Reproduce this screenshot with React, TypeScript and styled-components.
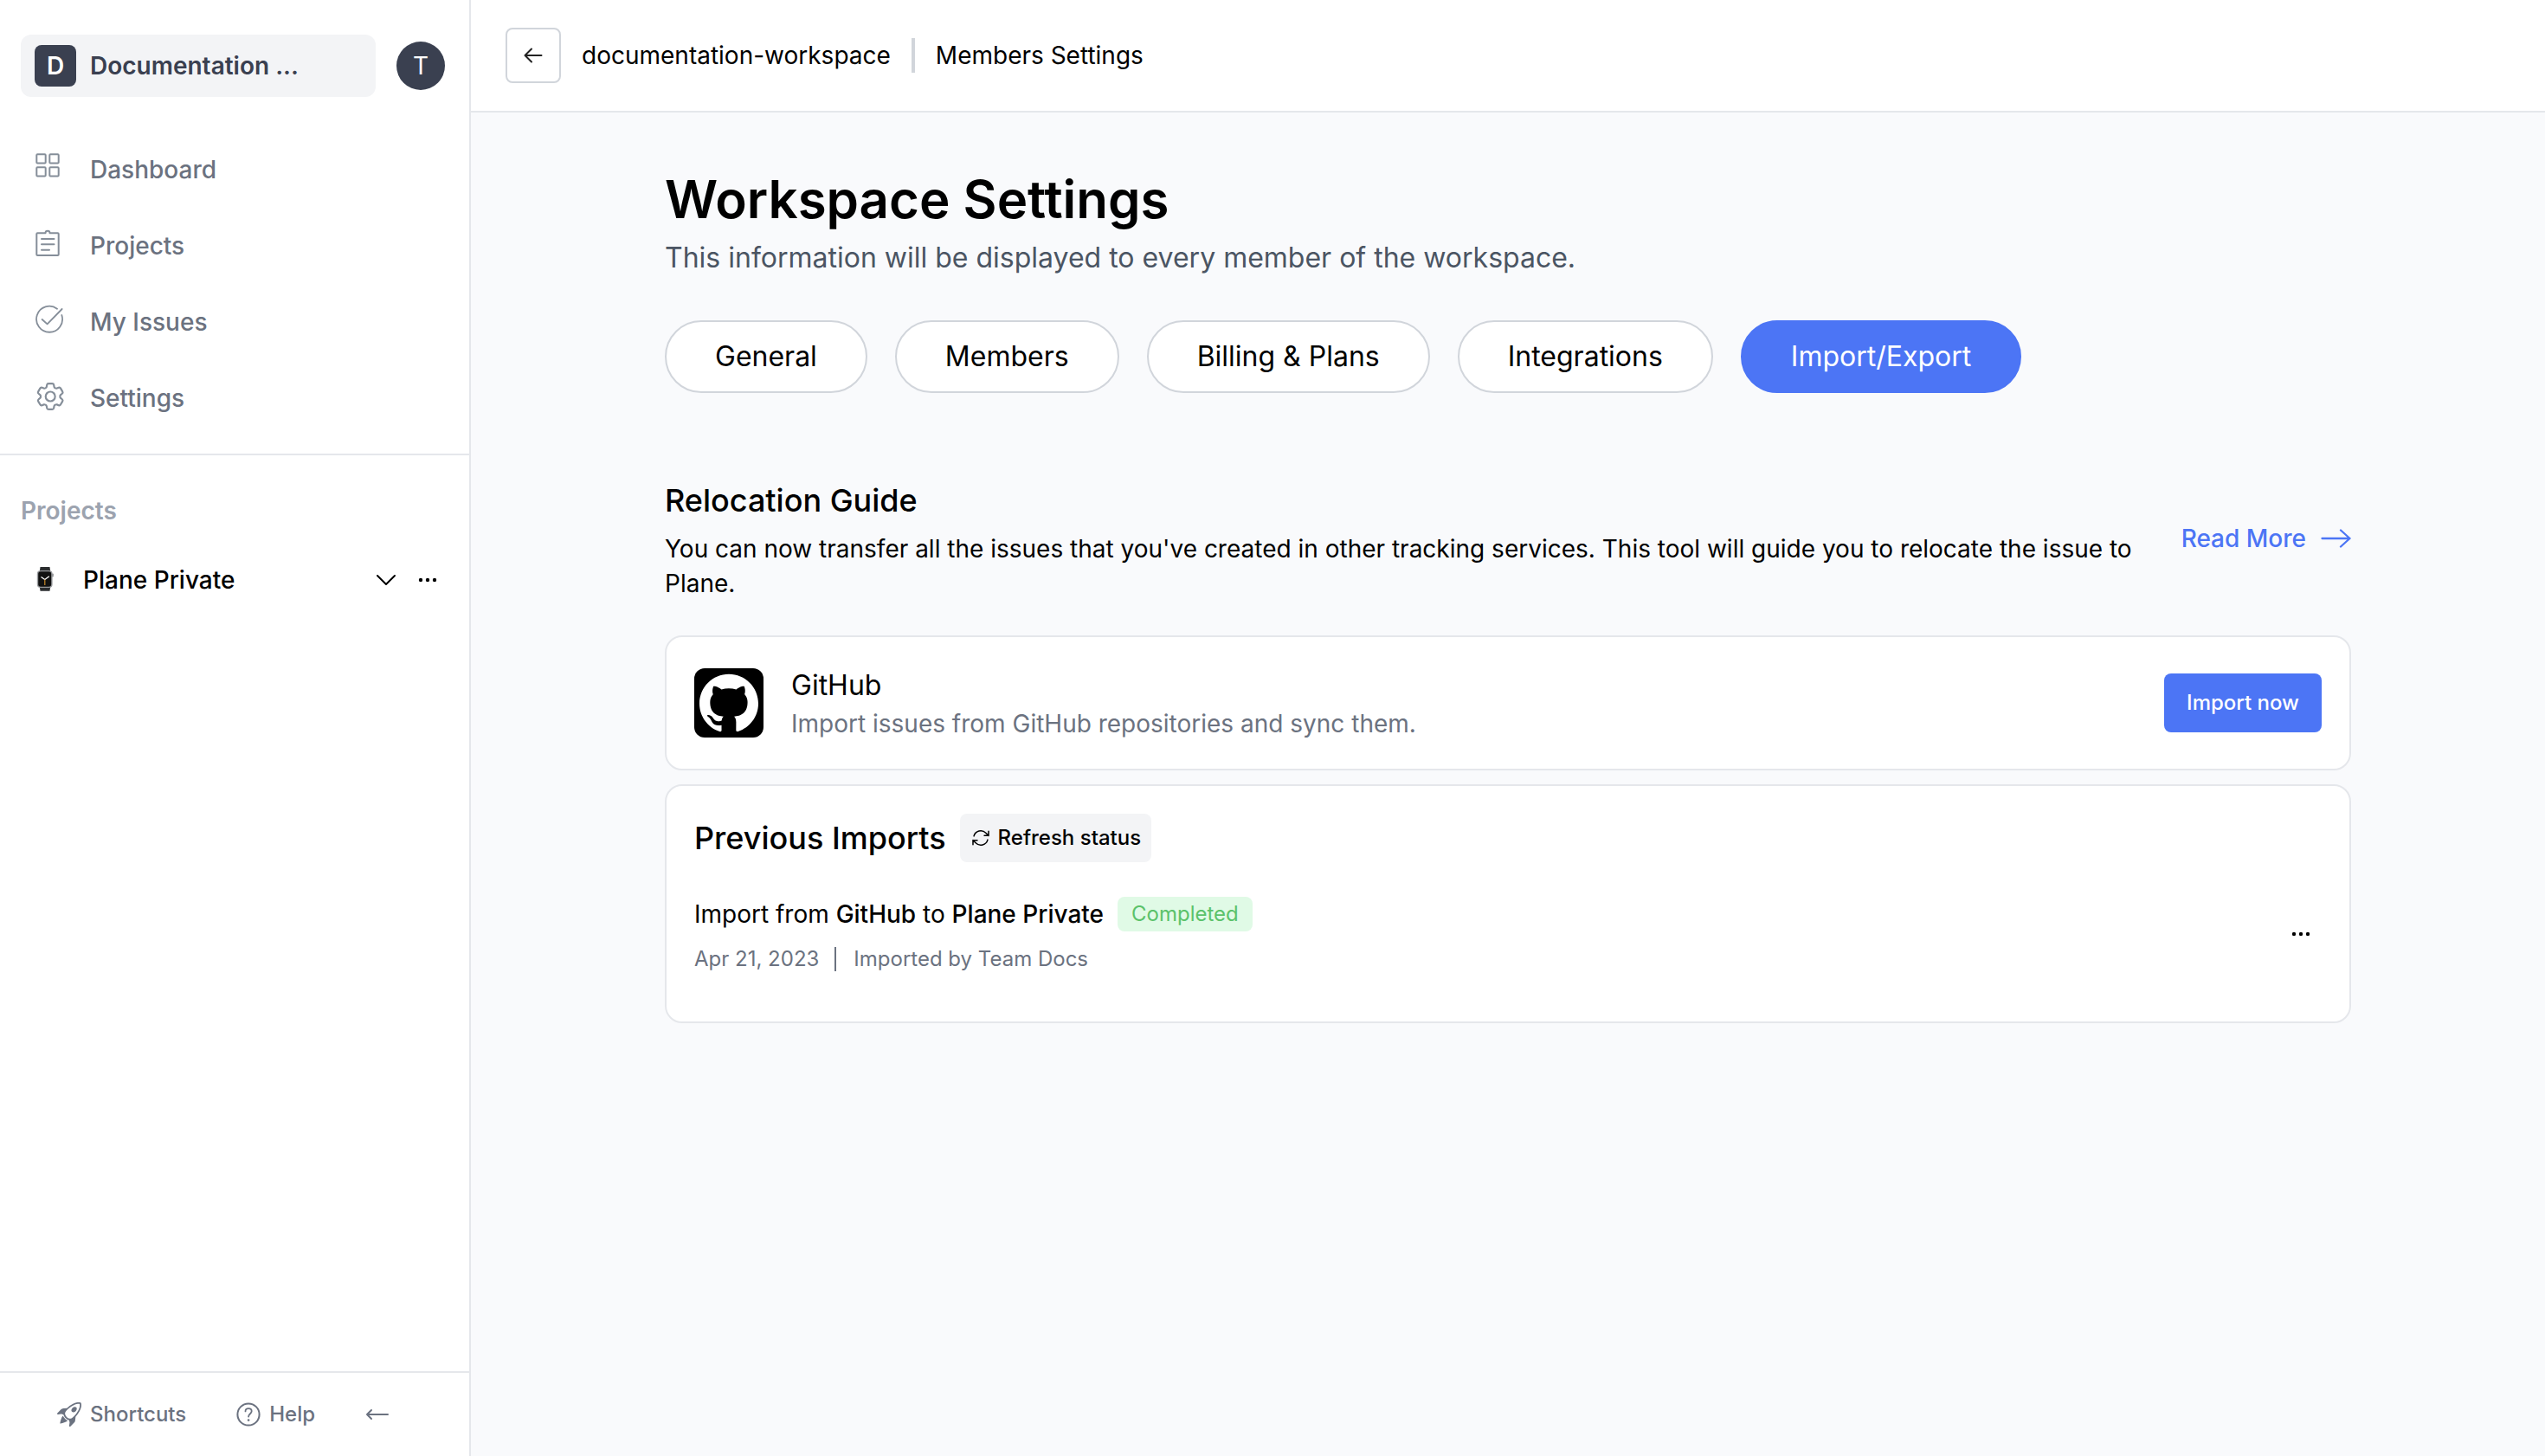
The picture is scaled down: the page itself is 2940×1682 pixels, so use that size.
import React from "react";
import styled, { createGlobalStyle } from "styled-components";
import { BsRocketTakeoff } from "react-icons/bs";
import { SiGithub } from "react-icons/si";

const GlobalStyle = createGlobalStyle`
  *, *::before, *::after { box-sizing: border-box; }
  body { margin: 0; font-family: Inter, "Liberation Sans", sans-serif; font-size: 28px; line-height: 40px; color: #000; background: #f9fafc; }
  button { font: inherit; color: inherit; background: none; border: 0; padding: 0; cursor: pointer; }
  a { color: inherit; text-decoration: none; }
  h1, h2, h3, p { margin: 0; font-size: inherit; font-weight: inherit; }
  svg { display: block; flex: none; }
`;

const Layout = styled.div`
  display: flex;
  min-height: 100vh;
`;

const Sidebar = styled.aside`
  display: flex;
  flex-direction: column;
  flex: none;
  width: 544px;
  background: #fff;
  border-right: 2px solid #e5e7eb;
`;

const WorkspaceBar = styled.div`
  display: flex;
  align-items: center;
  gap: 24px;
  padding: 40px 28px 0 24px;
`;

const WorkspaceButton = styled.button`
  display: flex;
  align-items: center;
  gap: 16px;
  flex: 1;
  height: 72px;
  padding: 0 16px;
  border-radius: 12px;
  background: #f3f4f6;
  color: #3a4050;
  font-weight: 600;
`;

const Badge = styled.span<{ $round?: boolean }>`
  display: flex;
  align-items: center;
  justify-content: center;
  flex: none;
  width: ${(p) => (p.$round ? 56 : 48)}px;
  height: ${(p) => (p.$round ? 56 : 48)}px;
  border-radius: ${(p) => (p.$round ? "50%" : "8px")};
  background: #3a4050;
  color: #fff;
  font-weight: ${(p) => (p.$round ? 400 : 600)};
`;

const AvatarButton = styled.button`
  flex: none;
`;

const Nav = styled.nav`
  display: flex;
  flex-direction: column;
  gap: 16px;
  padding: 48px 24px 28px;
  border-bottom: 2px solid #e5e7eb;
`;

const NavLink = styled.a`
  display: flex;
  align-items: center;
  gap: 24px;
  height: 72px;
  padding: 0 16px;
  color: #6b7280;
  font-weight: 500;

  svg { color: #858e99; }
`;

const Projects = styled.section`
  display: flex;
  flex-direction: column;
  flex: 1;
  gap: 40px;
  padding: 44px 24px;
`;

const ProjectsTitle = styled.h3`
  color: #9ca3af;
  font-weight: 600;
`;

const ProjectRow = styled.div`
  display: flex;
  align-items: center;
  gap: 24px;
  padding: 0 12px 0 16px;
  font-weight: 500;
`;

const ProjectName = styled.a`
  display: flex;
  align-items: center;
  gap: 32px;
  flex: 1;
`;

const Footer = styled.footer`
  display: flex;
  align-items: center;
  height: 98px;
  padding: 0 64px;
  gap: 56px;
  border-top: 2px solid #e5e7eb;
  color: #6b7280;
  font-size: 24px;
  font-weight: 500;
`;

const FooterButton = styled.button`
  display: flex;
  align-items: center;
  gap: 8px;
`;

const Content = styled.div`
  flex: 1;
  min-width: 0;
`;

const Header = styled.header`
  display: flex;
  align-items: center;
  gap: 24px;
  height: 130px;
  padding: 0 40px;
  background: #fff;
  border-bottom: 2px solid #e5e7eb;
`;

const BackButton = styled.button`
  display: flex;
  align-items: center;
  justify-content: center;
  width: 64px;
  height: 64px;
  border: 2px solid #d1d5db;
  border-radius: 8px;
`;

const Crumb = styled.a`
  & + & {
    padding-left: 24px;
    border-left: 4px solid #d1d5db;
  }
`;

const Main = styled.main`
  padding: 64px 224px;
`;

const Title = styled.h1`
  font-size: 60px;
  line-height: 72px;
  font-weight: 600;
`;

const Subtitle = styled.p`
  margin-top: 8px;
  font-size: 32px;
  line-height: 48px;
  color: #4b5563;
`;

const Tabs = styled.nav`
  display: flex;
  flex-wrap: wrap;
  gap: 32px;
  margin: 48px 0 96px;
`;

const Tab = styled.a<{ $active?: boolean }>`
  padding: 16px 56px;
  border: 2px solid ${(p) => (p.$active ? "#4c75f5" : "#d1d5db")};
  border-radius: 42px;
  background: ${(p) => (p.$active ? "#4c75f5" : "#fff")};
  color: ${(p) => (p.$active ? "#fff" : "#000")};
  font-size: 32px;
  line-height: 48px;
`;

const Guide = styled.section`
  display: flex;
  align-items: center;
  gap: 32px;
  margin-bottom: 40px;
`;

const GuideText = styled.div`
  display: flex;
  flex-direction: column;
  gap: 8px;
  flex: 1;
`;

const SectionTitle = styled.h2`
  font-size: 36px;
  line-height: 56px;
  font-weight: 500;
`;

const ReadMore = styled.a`
  display: flex;
  align-items: center;
  gap: 16px;
  color: #4c75f5;
  font-weight: 500;
`;

const Card = styled.section`
  padding: 32px;
  border: 2px solid #e5e7eb;
  border-radius: 20px;
  background: #fff;

  & + & { margin-top: 16px; }
`;

const Row = styled.div`
  display: flex;
  align-items: center;
  gap: 32px;
`;

const Grow = styled.div`
  flex: 1;
`;

const LogoTile = styled.div`
  display: flex;
  align-items: center;
  justify-content: center;
  width: 80px;
  height: 80px;
  border-radius: 12px;
  background: #000;
  color: #fff;
`;

const ServiceName = styled.h3`
  font-size: 32px;
  line-height: 48px;
`;

const Muted = styled.p`
  color: #6b7280;
`;

const PrimaryButton = styled.button`
  padding: 18px 26px;
  border-radius: 8px;
  background: #4c75f5;
  color: #fff;
  font-size: 24px;
  line-height: 32px;
  font-weight: 500;
`;

const ImportsHeader = styled.div`
  display: flex;
  align-items: center;
  gap: 16px;
  margin-bottom: 32px;
`;

const RefreshButton = styled.button`
  display: flex;
  align-items: center;
  gap: 8px;
  height: 56px;
  padding: 0 12px;
  border-radius: 8px;
  background: #f3f4f6;
  font-size: 24px;
  font-weight: 500;
`;

const ImportRow = styled(Row)`
  padding: 8px 12px 26px 0;
`;

const ImportName = styled.h3`
  display: flex;
  align-items: center;
  gap: 16px;

  b { font-weight: 500; }
`;

const Status = styled.span`
  padding: 0 16px;
  border-radius: 8px;
  background: #e0fae6;
  color: #5bc26a;
  font-size: 24px;
`;

const Meta = styled.div`
  display: flex;
  align-items: center;
  gap: 18px;
  margin-top: 18px;
  color: #6b7280;
  font-size: 24px;
  line-height: 28px;

  span + span {
    padding-left: 20px;
    border-left: 2px solid #6b7280;
  }
`;

const navIconProps = {
  width: 40,
  height: 40,
  viewBox: "0 0 40 40",
  fill: "none",
  stroke: "currentColor",
  strokeWidth: 2,
  strokeLinecap: "round" as const,
  strokeLinejoin: "round" as const,
};

const GridIcon = () => (
  <svg {...navIconProps}>
    <rect x="2.3" y="2.2" width="10.4" height="10.4" rx="1" />
    <rect x="17.3" y="2.2" width="10.4" height="10.4" rx="1" />
    <rect x="2.3" y="17.2" width="10.4" height="10.4" rx="1" />
    <rect x="17.3" y="17.2" width="10.4" height="10.4" rx="1" />
  </svg>
);

const ClipboardIcon = () => (
  <svg {...navIconProps}>
    <path d="M12.5 5.2H3.3a1 1 0 0 0-1 1V30a1 1 0 0 0 1 1h23.4a1 1 0 0 0 1-1V6.2a1 1 0 0 0-1-1h-9.2c0-1.4-1-2.4-2.5-2.4s-2.5 1-2.5 2.4Z" />
    <path d="M8 12h14.5M8 18.3h14.5M8 24.7h9" />
  </svg>
);

const CheckIcon = () => (
  <svg {...navIconProps} strokeWidth={1.8}>
    <path d="M26 4.7A15 15 0 1 0 31.3 12" />
    <path d="m8.6 17 6 5.4L31.6 5" />
  </svg>
);

const GearIcon = () => (
  <svg {...navIconProps} viewBox="1.04 1.16 24.1 24.1" strokeWidth={1.3}>
    <path d="M9.594 3.94c.09-.542.56-.94 1.11-.94h2.593c.55 0 1.02.398 1.11.94l.213 1.281c.063.374.313.686.645.87.074.04.147.083.22.127.325.196.72.257 1.075.124l1.217-.456a1.125 1.125 0 0 1 1.37.49l1.296 2.247a1.125 1.125 0 0 1-.26 1.431l-1.003.827c-.293.241-.438.613-.43.992a7.723 7.723 0 0 1 0 .255c-.008.378.137.75.43.991l1.004.827c.424.35.534.955.26 1.43l-1.298 2.247a1.125 1.125 0 0 1-1.369.491l-1.217-.456c-.355-.133-.75-.072-1.076.124a6.47 6.47 0 0 1-.22.128c-.331.183-.581.495-.644.869l-.213 1.281c-.09.543-.56.94-1.11.94h-2.594c-.55 0-1.019-.398-1.11-.94l-.213-1.281c-.062-.374-.312-.686-.644-.87a6.52 6.52 0 0 1-.22-.127c-.325-.196-.72-.257-1.076-.124l-1.217.456a1.125 1.125 0 0 1-1.369-.49l-1.297-2.247a1.125 1.125 0 0 1 .26-1.431l1.004-.827c.292-.24.437-.613.43-.991a6.932 6.932 0 0 1 0-.255c.007-.38-.138-.751-.43-.992l-1.004-.827a1.125 1.125 0 0 1-.26-1.43l1.297-2.247a1.125 1.125 0 0 1 1.37-.491l1.216.456c.356.133.751.072 1.076-.124.072-.044.146-.086.22-.128.332-.183.582-.495.644-.869l.214-1.28Z" />
    <circle cx="12" cy="12" r="3.3" />
  </svg>
);

const WatchIcon = () => (
  <svg width="24" height="32" viewBox="0 0 24 32">
    <path d="M6.5 1h11l.8 6H5.700ZM5.700 23h12.600l-.8 5.800h-11Z" fill="#2b2d2f" />
    <rect x="20" y="8.500" width="1.800" height="4" rx=".8" fill="#8d8f92" />
    <rect x="2.800" y="5" width="17.800" height="20" rx="4" fill="#97999c" />
    <rect x="4.200" y="6.200" width="15" height="17.600" rx="2.800" fill="#111" />
    <path d="m7.500 12.500 4.300 3 5-3.800" fill="none" stroke="#fff" strokeWidth="1.300" />
    <path d="M11.800 15.500V22" stroke="#c98a2b" strokeWidth="1.200" />
  </svg>
);

const Dots = () => (
  <svg width="24" height="24" viewBox="0 0 24 24" fill="currentColor">
    <circle cx="4" cy="12" r="2.200" /><circle cx="12" cy="12" r="2.200" /><circle cx="20" cy="12" r="2.200" />
  </svg>
);

const ChevronDown = () => (
  <svg width="24" height="24" viewBox="0 0 24 24" fill="none" stroke="currentColor" strokeWidth="2" strokeLinecap="round" strokeLinejoin="round">
    <path d="m2 7 10 10L22 7" />
  </svg>
);

const HelpIcon = () => (
  <svg width="32" height="32" viewBox="0 0 32 32" fill="none" stroke="currentColor" strokeWidth="2" strokeLinecap="round">
    <circle cx="16" cy="16" r="12.600" />
    <path d="M12.500 12.400c0-2 1.500-3.300 3.600-3.300s3.600 1.300 3.600 3.200c0 2.900-3.600 3.100-3.600 6.200" strokeWidth="1.800" />
    <circle cx="16.100" cy="22.600" r="1.300" fill="currentColor" stroke="none" />
  </svg>
);

const CollapseIcon = () => (
  <svg width="32" height="32" viewBox="0 0 32 32" fill="none" stroke="currentColor" strokeWidth="2" strokeLinecap="round" strokeLinejoin="round">
    <path d="M28 16H4M9 11l-5 5 5 5" />
  </svg>
);

const BackIcon = () => (
  <svg width="24" height="24" viewBox="0 0 24 24" fill="none" stroke="#222" strokeWidth="2" strokeLinecap="round" strokeLinejoin="round">
    <path d="M21.500 12H2.500M10 4.500 2.500 12l7.500 7.500" />
  </svg>
);

const LongArrowRight = () => (
  <svg width="36" height="24" viewBox="0 0 36 24" fill="none" stroke="currentColor" strokeWidth="2.300" strokeLinecap="round" strokeLinejoin="round">
    <path d="M2.500 12h32M24 2.500 34.500 12 24 21.500" />
  </svg>
);

const RefreshIcon = () => (
  <svg width="24" height="24" viewBox="0 0 24 24" fill="none" stroke="currentColor" strokeWidth="1.500" strokeLinecap="round" strokeLinejoin="round">
    <path d="M16.023 9.348h4.992v-.001M2.985 19.644v-4.992m0 0h4.992m-4.993 0 3.181 3.183a8.250 8.250 0 0 0 13.803-3.700M4.031 9.865a8.250 8.250 0 0 1 13.803-3.700l3.181 3.182m0-4.991v4.990" />
  </svg>
);

const RocketSlot = styled.span`
  display: flex;
  justify-content: center;
  width: 32px;
`;

const navItems = [
  { label: "Dashboard", Icon: GridIcon },
  { label: "Projects", Icon: ClipboardIcon },
  { label: "My Issues", Icon: CheckIcon },
  { label: "Settings", Icon: GearIcon },
];

const tabs = ["General", "Members", "Billing & Plans", "Integrations", "Import/Export"];

export default function App() {
  return (
    <>
      <GlobalStyle />
      <Layout>
        <Sidebar>
          <WorkspaceBar>
            <WorkspaceButton><Badge>D</Badge>Documentation ...</WorkspaceButton>
            <AvatarButton><Badge $round>T</Badge></AvatarButton>
          </WorkspaceBar>
          <Nav>
            {navItems.map(({ label, Icon }) => (
              <NavLink href="#" key={label}><Icon />{label}</NavLink>
            ))}
          </Nav>
          <Projects>
            <ProjectsTitle>Projects</ProjectsTitle>
            <ProjectRow>
              <ProjectName href="#"><WatchIcon />Plane Private</ProjectName>
              <button aria-label="Expand project"><ChevronDown /></button>
              <button aria-label="Project options"><Dots /></button>
            </ProjectRow>
          </Projects>
          <Footer>
            <FooterButton><RocketSlot><BsRocketTakeoff size={28} /></RocketSlot>Shortcuts</FooterButton>
            <FooterButton><HelpIcon />Help</FooterButton>
            <FooterButton aria-label="Collapse sidebar"><CollapseIcon /></FooterButton>
          </Footer>
        </Sidebar>
        <Content>
          <Header>
            <BackButton aria-label="Back"><BackIcon /></BackButton>
            <Crumb href="#">documentation-workspace</Crumb>
            <Crumb href="#">Members Settings</Crumb>
          </Header>
          <Main>
            <Title>Workspace Settings</Title>
            <Subtitle>This information will be displayed to every member of the workspace.</Subtitle>
            <Tabs>
              {tabs.map((tab) => (
                <Tab href="#" key={tab} $active={tab === "Import/Export"}>{tab}</Tab>
              ))}
            </Tabs>
            <Guide>
              <GuideText>
                <SectionTitle>Relocation Guide</SectionTitle>
                <p>You can now transfer all the issues that you've created in other tracking services. This tool will guide you to relocate the issue to Plane.</p>
              </GuideText>
              <ReadMore href="#">Read More<LongArrowRight /></ReadMore>
            </Guide>
            <Card>
              <Row>
                <LogoTile><SiGithub size={68} /></LogoTile>
                <Grow>
                  <ServiceName>GitHub</ServiceName>
                  <Muted>Import issues from GitHub repositories and sync them.</Muted>
                </Grow>
                <PrimaryButton>Import now</PrimaryButton>
              </Row>
            </Card>
            <Card>
              <ImportsHeader>
                <SectionTitle>Previous Imports</SectionTitle>
                <RefreshButton><RefreshIcon />Refresh status</RefreshButton>
              </ImportsHeader>
              <ImportRow>
                <Grow>
                  <ImportName><span>Import from <b>GitHub</b> to <b>Plane Private</b></span><Status>Completed</Status></ImportName>
                  <Meta><span>Apr 21, 2023</span><span>Imported by Team Docs</span></Meta>
                </Grow>
                <button aria-label="Import options"><Dots /></button>
              </ImportRow>
            </Card>
          </Main>
        </Content>
      </Layout>
    </>
  );
}
